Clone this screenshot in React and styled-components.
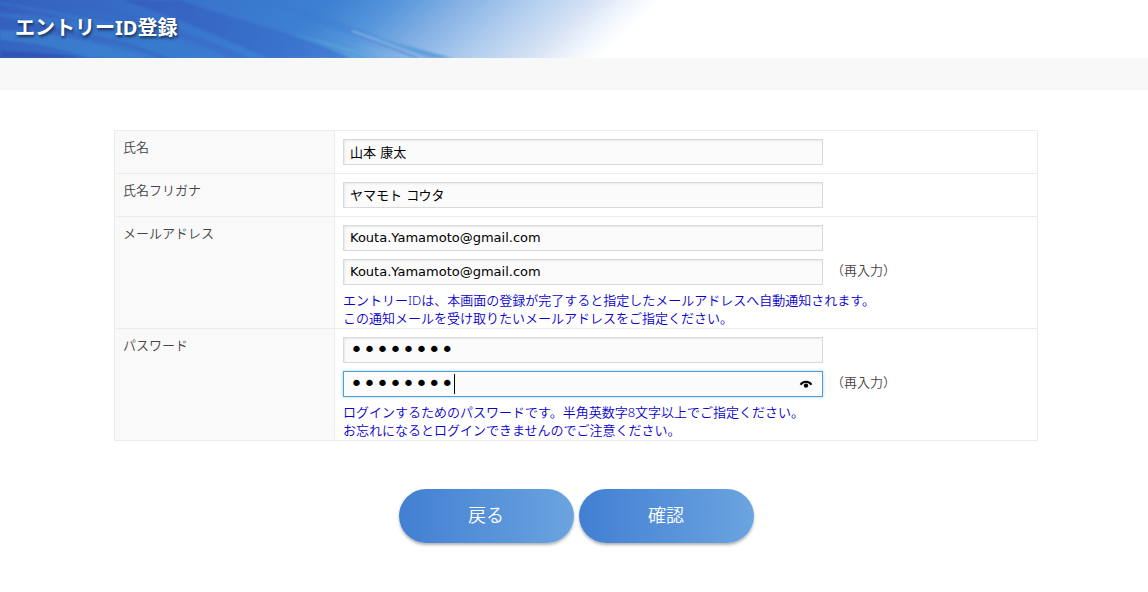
import React, { useState } from 'react';
import styled, { css, createGlobalStyle, ThemeProvider } from 'styled-components';

const theme = {
  colors: {
    text: '#444444',
    note: '#0800cc',
    line: '#ececec',
    pale: '#f9f9f9',
    field: '#fbfbfb',
    fieldLine: '#d8dbdb',
    focus: '#5a9bd5',
  },
  font: '"Noto Sans", "Noto Sans CJK JP", sans-serif',
  inputFont: '"DejaVu Sans", "Noto Sans CJK JP", sans-serif',
};

const GlobalStyle = createGlobalStyle`
  * {
    box-sizing: border-box;
  }
  body {
    margin: 0;
    background: #ffffff;
    color: ${theme.colors.text};
    font-family: ${theme.font};
    font-size: 13px;
    font-weight: 350;
    line-height: 18px;
  }
`;

const Field = ({ type = 'text', label, initial, active, after }) => {
  const [value, setValue] = useState(initial);
  return (
    <FieldRow>
      <InputWrap>
        <Input
          type={type}
          aria-label={label}
          value={value}
          $active={active}
          onChange={(e) => setValue(e.target.value)}
        />
        {active && <Caret />}
        {active && (
          <RevealButton type="button" aria-label="パスワードを表示">
            <svg width="14" height="10" viewBox="0 0 14 10">
              <path d="M1.6 5.8 C3.6 1.6 10.4 1.6 12.4 5.8" fill="none" stroke="#000" strokeWidth="2" />
              <circle cx="7" cy="6.6" r="2.2" fill="#000" />
            </svg>
          </RevealButton>
        )}
      </InputWrap>
      {after && <After>{after}</After>}
    </FieldRow>
  );
};

const Waves = () => (
  <WaveArt viewBox="0 0 720 58" preserveAspectRatio="none" aria-hidden="true">
    <defs>
      <linearGradient id="sky" gradientUnits="userSpaceOnUse" x1="0" y1="0" x2="300" y2="330">
        <stop offset="0" stopColor="#345fbd" />
        <stop offset="0.3" stopColor="#3874cb" />
        <stop offset="0.5" stopColor="#3d80d2" />
        <stop offset="0.6" stopColor="#5595db" />
        <stop offset="0.7" stopColor="#86b2e4" />
        <stop offset="0.8" stopColor="#b0cdee" />
        <stop offset="0.89" stopColor="#d3e1f4" />
        <stop offset="0.96" stopColor="#f2f7fd" />
        <stop offset="1" stopColor="#ffffff" />
      </linearGradient>
      <linearGradient id="deep" x1="0" y1="0" x2="1" y2="0">
        <stop offset="0" stopColor="#3559bd" stopOpacity="0.8" />
        <stop offset="1" stopColor="#3a76d0" stopOpacity="0.7" />
      </linearGradient>
      <linearGradient id="glow" x1="0" y1="0" x2="1" y2="0">
        <stop offset="0" stopColor="#3f8dd4" stopOpacity="0" />
        <stop offset="1" stopColor="#8fc0ea" stopOpacity="0.5" />
      </linearGradient>
      <filter id="soft" x="-5%" y="-20%" width="110%" height="140%">
        <feGaussianBlur stdDeviation="0.8" />
      </filter>
    </defs>
    <rect width="720" height="58" fill="url(#sky)" />
    <g filter="url(#soft)">
      <path d="M0 2 C60 12 130 22 215 58 L150 58 C100 38 50 24 0 16Z" fill="#3a7fcd" opacity="0.5" />
      <path d="M0 30 C60 34 100 42 150 58 L90 58 C60 48 30 42 0 40Z" fill="#3c86d0" opacity="0.6" />
      <path d="M0 4 C40 10 80 18 120 32 C80 22 40 16 0 13Z" fill="url(#deep)" />
      <path d="M0 22 C60 26 120 38 170 58 L160 58 C110 40 60 31 0 26Z" fill="#3559ba" opacity="0.4" />
      <path d="M0 51 C30 52 60 54 84 58 L0 58Z" fill="#304fb0" opacity="0.8" />
      <path d="M60 0 L88 0 C160 22 200 36 250 58 L230 58 C180 36 120 16 60 0Z" fill="#3563c2" opacity="0.4" />
      <path d="M122 0 L180 0 C230 18 290 30 350 58 L268 58 C220 38 180 18 122 0Z" fill="url(#deep)" />
      <path d="M250 0 L278 0 C320 14 355 27 390 41 L440 58 L420 58 C360 38 310 20 250 0Z" fill="#3a78cf" opacity="0.3" />
      <path d="M290 34 C320 40 350 48 375 58 L362 58 C340 48 315 40 290 34Z" fill="#5cabe0" opacity="0.6" />
      <path d="M310 30 L410 58 L385 58 C360 48 335 38 310 30Z" fill="url(#glow)" />
      <path d="M358 32 L452 58 L436 58 C408 50 380 40 358 32Z" fill="#5a9fda" opacity="0.9" />
      <path d="M352 31 L425 58" fill="none" stroke="#94bfeb" strokeWidth="2" opacity="0.7" />
      <path d="M345 30 L417 58" fill="none" stroke="#5285d2" strokeWidth="1.5" opacity="0.7" />
      <path d="M295 37 C325 44 345 50 365 58" fill="none" stroke="#3391cb" strokeWidth="1.2" opacity="0.6" />
    </g>
  </WaveArt>
);

const App = () => (
  <ThemeProvider theme={theme}>
    <GlobalStyle />
    <Header>
      <Waves />
      <Title>エントリーID登録</Title>
    </Header>
    <SubBar />
    <Main>
      <form onSubmit={(e) => e.preventDefault()}>
        <Table>
          <tbody>
            <tr>
              <Th scope="row">氏名</Th>
              <Td>
                <Field label="氏名" initial="山本 康太" />
              </Td>
            </tr>
            <tr>
              <Th scope="row">氏名フリガナ</Th>
              <Td>
                <Field label="氏名フリガナ" initial="ヤマモト コウタ" />
              </Td>
            </tr>
            <tr>
              <Th scope="row">メールアドレス</Th>
              <Td $flush>
                <Field label="メールアドレス" initial="Kouta.Yamamoto@gmail.com" />
                <Field label="メールアドレス（再入力）" initial="Kouta.Yamamoto@gmail.com" after="（再入力）" />
                <Note>
                  エントリーIDは、本画面の登録が完了すると指定したメールアドレスへ自動通知されます。<br />
                  この通知メールを受け取りたいメールアドレスをご指定ください。
                </Note>
              </Td>
            </tr>
            <tr>
              <Th scope="row">パスワード</Th>
              <Td $flush>
                <Field type="password" label="パスワード" initial="yamamoto" />
                <Field type="password" label="パスワード（再入力）" initial="yamamoto" active after="（再入力）" />
                <Note>
                  ログインするためのパスワードです。半角英数字8文字以上でご指定ください。<br />
                  お忘れになるとログインできませんのでご注意ください。
                </Note>
              </Td>
            </tr>
          </tbody>
        </Table>
        <Buttons>
          <PillButton type="button">戻る</PillButton>
          <PillButton type="submit">確認</PillButton>
        </Buttons>
      </form>
    </Main>
  </ThemeProvider>
);

const Header = styled.header`
  position: relative;
  height: 58px;
  padding: 13px 15px;
  overflow: hidden;
`;
const WaveArt = styled.svg`
  position: absolute;
  top: 0;
  left: 0;
  width: 720px;
  height: 100%;
`;
const Title = styled.h1`
  position: relative;
  margin: 0;
  color: #ffffff;
  font-size: 20px;
  font-weight: 700;
  line-height: 30px;
  text-shadow: 1px 2px 3px rgba(0, 0, 0, 0.6);
`;
const SubBar = styled.div`
  height: 32px;
  background: #f8f8f8;
`;
const Main = styled.main`
  padding: 40px 110px 48px 114px;
`;
const Table = styled.table`
  width: 100%;
  border-collapse: collapse;
`;
const cell = css`
  border: 1px solid ${({ theme }) => theme.colors.line};
  padding: 8px;
  vertical-align: top;
`;
const Th = styled.th`
  ${cell};
  width: 220px;
  padding-top: 7px;
  background: ${({ theme }) => theme.colors.pale};
  font-weight: 350;
  text-align: left;
`;
const Td = styled.td`
  ${cell};
  ${({ $flush }) => $flush && 'padding-bottom: 1px;'}
`;
const FieldRow = styled.div`
  display: flex;
  align-items: center;
  gap: 8px;

  & + & {
    margin-top: 8px;
  }
`;
const InputWrap = styled.div`
  position: relative;
  flex: 0 1 480px;
`;
const After = styled.span`
  padding-bottom: 4px;
`;
const Input = styled.input`
  display: block;
  width: 100%;
  height: 26px;
  padding: 0 6px 2px;
  border: 1px solid ${({ theme }) => theme.colors.fieldLine};
  background: ${({ theme }) => theme.colors.field};
  box-shadow: inset 1px 1px 2px rgba(0, 0, 0, 0.08);
  color: #000000;
  font-family: ${({ theme }) => theme.inputFont};
  font-size: 13px;
  outline: none;

  &[type='password'] {
    font-size: 22px;
  }

  ${({ $active, theme }) =>
    $active &&
    css`
      border-color: ${theme.colors.focus};
      box-shadow: 0 0 3px rgba(90, 175, 240, 0.6);
      caret-color: transparent;
    `}
`;
const Caret = styled.span`
  position: absolute;
  top: 3px;
  left: 111px;
  width: 1px;
  height: 20px;
  background: #000000;
`;
const RevealButton = styled.button`
  position: absolute;
  top: 3px;
  right: 6px;
  display: flex;
  align-items: center;
  justify-content: center;
  width: 22px;
  height: 20px;
  padding: 0;
  border: 0;
  background: none;
`;
const Note = styled.p`
  margin: 6px 0 0;
  color: ${({ theme }) => theme.colors.note};
`;
const Buttons = styled.div`
  display: flex;
  justify-content: center;
  gap: 5px;
  margin-top: 48px;
`;
const PillButton = styled.button`
  width: 175px;
  height: 54px;
  padding: 0 0 4px;
  border: 0;
  border-radius: 27px;
  background: linear-gradient(to right, #427fd3, #6ba4df);
  box-shadow: 0 2px 3px rgba(0, 0, 0, 0.3);
  color: #ffffff;
  font-family: ${({ theme }) => theme.font};
  font-size: 18px;
  font-weight: 350;
`;

export default App;
